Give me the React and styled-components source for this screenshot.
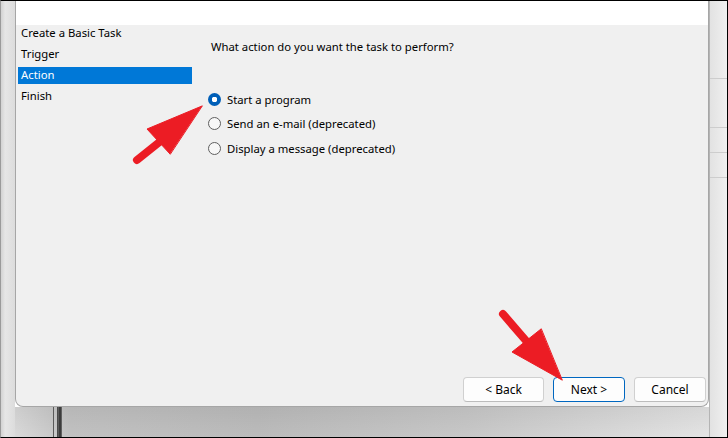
import React from 'react'
import styled, { createGlobalStyle } from 'styled-components'

const GlobalStyle = createGlobalStyle`
  html, body { margin: 0; padding: 0; background: #fff; }
  body { font-family: "Segoe UI", "Noto Sans", "Open Sans", sans-serif; font-size: 11.3px; color: #000; }
`

const steps = ['Create a Basic Task', 'Trigger', 'Action', 'Finish']
const actions = [
  { label: 'Start a program', checked: true },
  { label: 'Send an e-mail (deprecated)' },
  { label: 'Display a message (deprecated)' },
]

export default function App() {
  return (
    <>
      <GlobalStyle />
      <Screen>
        <LeftGutter />
        <Dialog>
          <Header />
          <Body>
            <StepList>
              {steps.map(s => (
                <Step key={s} active={s === 'Action'}>{s}</Step>
              ))}
            </StepList>
            <Content>
              <Question>What action do you want the task to perform?</Question>
              <RadioGroup>
                {actions.map(a => (
                  <RadioRow key={a.label}>
                    <Radio checked={a.checked} />
                    <span>{a.label}</span>
                  </RadioRow>
                ))}
              </RadioGroup>
            </Content>
            <Footer>
              <Button wide>&lt; Back</Button>
              <Button primary>Next &gt;</Button>
              <Button>Cancel</Button>
            </Footer>
          </Body>
        </Dialog>
        <RightGutter />
        <BehindWindow />
        <Arrows width="728" height="438" viewBox="0 0 728 438">
          <g fill="#ec1c24" stroke="#ec1c24" strokeLinecap="round" strokeLinejoin="round">
            <line x1="137" y1="160" x2="162" y2="140" strokeWidth="8" />
            <polygon points="202,106 147,129 170,154" strokeWidth="1" />
            <line x1="503" y1="314" x2="528" y2="343" strokeWidth="8" />
            <polygon points="562,380 512,352 541,329" strokeWidth="1" />
          </g>
        </Arrows>
      </Screen>
    </>
  )
}

const Screen = styled.div`
  position: relative;
  width: 728px;
  height: 438px;
  box-sizing: border-box;
  border: 1px solid #000;
  border-left-color: #9a9a9a;
  display: grid;
  grid-template-columns: 14px 694px 1fr;
  grid-template-rows: 406px 1fr;
  overflow: hidden;
`

const LeftGutter = styled.div`
  grid-column: 1;
  grid-row: 1 / 3;
  background: linear-gradient(to right, #d2d2d2, #e6e6e6 30%, #dcdcdc);
`

const RightGutter = styled.div`
  grid-column: 3;
  grid-row: 1 / 3;
  border-left: 1px solid #b4b4b4;
  background:
    linear-gradient(to bottom,
      transparent 77px, #cdcdcd 77px, #cdcdcd 78px, transparent 78px,
      transparent 126px, #cdcdcd 126px, #cdcdcd 127px, transparent 127px,
      transparent 151px, #cdcdcd 151px, #cdcdcd 152px, transparent 152px,
      transparent 176px, #cdcdcd 176px, #cdcdcd 177px, transparent 177px),
    linear-gradient(to right, #e2e2e2, #f0f0f0);
`

const BehindWindow = styled.div`
  grid-column: 2;
  grid-row: 2;
  background:
    linear-gradient(to right,
      transparent 38px, #5a5a5a 38px, #5a5a5a 39px, transparent 39px,
      transparent 42px, #4a4a4a 42px, #4a4a4a 43px, #7a7a7a 43px, #3c3c3c 44px,
      #3c3c3c 46px, #6a6a6a 46px, #555 47px, transparent 47px),
    linear-gradient(to bottom, rgba(0,0,0,0.06), rgba(0,0,0,0)),
    linear-gradient(to right, #dadada, #c2c2c2 8%, #bcbcbc 35%, #c8c8c8 65%, #e4e4e4);
`

const Dialog = styled.div`
  grid-column: 2;
  grid-row: 1;
  display: flex;
  flex-direction: column;
  background: #f0f0f0;
  border: 1px solid #a6a6a6;
  border-top: none;
  border-radius: 0 0 8px 8px;
  box-sizing: border-box;
`

const Header = styled.div`
  height: 24px;
  background: #fff;
`

const Body = styled.div`
  flex: 1;
  display: grid;
  grid-template-columns: 176px 1fr;
  grid-template-rows: 1fr auto;
`

const StepList = styled.ul`
  list-style: none;
  margin: 0;
  padding: 0 0 0 2px;
  display: flex;
  flex-direction: column;
  gap: 4px;
`

const Step = styled.li`
  height: 17px;
  line-height: 16px;
  padding-left: 3px;
  background: ${p => (p.active ? '#0078d7' : 'transparent')};
  color: ${p => (p.active ? '#fff' : '#000')};
`

const Content = styled.div`
  padding: 14px 0 0 19px;
`

const Question = styled.div`
  line-height: 16px;
  height: 16px;
`

const RadioGroup = styled.div`
  margin-top: 32px;
  margin-left: -3px;
  display: flex;
  flex-direction: column;
`

const RadioRow = styled.label`
  display: flex;
  align-items: center;
  height: 24.5px;
  gap: 6px;
`

const Radio = styled.span`
  width: 13px;
  height: 13px;
  border-radius: 50%;
  box-sizing: border-box;
  flex: none;
  ${p =>
    p.checked
      ? 'background: radial-gradient(circle, #fff 0 2.6px, #005fb8 3px);'
      : 'background: #f7f7f7; border: 1px solid #5f5f5f;'}
`

const Footer = styled.div`
  grid-column: 1 / 3;
  display: flex;
  justify-content: flex-end;
  gap: 9px;
  padding: 0 2px 4px 0;
`

const Button = styled.button`
  width: ${p => (p.wide ? '81px' : '72px')};
  height: 25px;
  font: inherit;
  font-size: 12px;
  color: #000;
  background: #fdfdfd;
  border: 1px solid ${p => (p.primary ? '#0067c0' : '#d0d0d0')};
  border-bottom-color: ${p => (p.primary ? '#0067c0' : '#bcbcbc')};
  border-radius: 4px;
  padding: 0;
`

const Arrows = styled.svg`
  position: absolute;
  left: -1px;
  top: -1px;
  pointer-events: none;
`
